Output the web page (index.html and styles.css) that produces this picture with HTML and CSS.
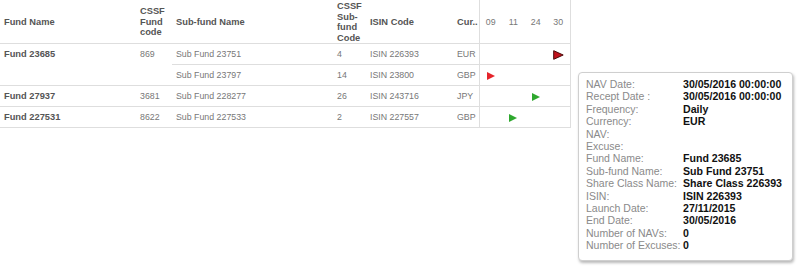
FILE: index.html
```html
<!DOCTYPE html>
<html>
<head>
<meta charset="utf-8">
<link rel="stylesheet" href="styles.css">
</head>
<body>
<table class="grid">
  <colgroup>
    <col class="c-fund"><col class="c-cssf"><col class="c-sub"><col class="c-subcode"><col class="c-isin"><col class="c-cur"><col class="c-dates">
  </colgroup>
  <thead>
    <tr>
      <th>Fund Name</th>
      <th>CSSF Fund code</th>
      <th>Sub-fund Name</th>
      <th>CSSF Sub-fund Code</th>
      <th>ISIN Code</th>
      <th class="cur">Cur..</th>
      <th class="dates"><div class="days"><span>09</span><span>11</span><span>24</span><span>30</span></div></th>
    </tr>
  </thead>
  <tbody>
    <tr>
      <td rowspan="2" class="fund">Fund 23685</td>
      <td rowspan="2">869</td>
      <td>Sub Fund 23751</td>
      <td>4</td>
      <td>ISIN 226393</td>
      <td class="cur">EUR</td>
      <td class="dates"><div class="days"><span></span><span></span><span></span><span><svg class="flag big" width="11" height="10" viewBox="0 0 11 10"><polygon points="0.7,0.7 10.2,5 0.7,9.3" fill="#c0121c" stroke="#4a0a0a" stroke-width="1"/></svg></span></div></td>
    </tr>
    <tr>
      <td>Sub Fund 23797</td>
      <td>14</td>
      <td>ISIN 23800</td>
      <td class="cur">GBP</td>
      <td class="dates"><div class="days"><span><svg class="flag" width="8" height="8" viewBox="0 0 8 8"><polygon points="0,0 8,4 0,8" fill="#e5242b"/></svg></span><span></span><span></span><span></span></div></td>
    </tr>
    <tr>
      <td class="fund">Fund 27937</td>
      <td>3681</td>
      <td>Sub Fund 228277</td>
      <td>26</td>
      <td>ISIN 243716</td>
      <td class="cur">JPY</td>
      <td class="dates"><div class="days"><span></span><span></span><span><svg class="flag" width="8" height="8" viewBox="0 0 8 8"><polygon points="0,0 8,4 0,8" fill="#2ea82e"/></svg></span><span></span></div></td>
    </tr>
    <tr>
      <td class="fund">Fund 227531</td>
      <td>8622</td>
      <td>Sub Fund 227533</td>
      <td>2</td>
      <td>ISIN 227557</td>
      <td class="cur">GBP</td>
      <td class="dates"><div class="days"><span></span><span><svg class="flag" width="8" height="8" viewBox="0 0 8 8"><polygon points="0,0 8,4 0,8" fill="#2ea82e"/></svg></span><span></span><span></span></div></td>
    </tr>
  </tbody>
</table>

<div class="tip">
  <div class="row"><span class="lbl">NAV Date:</span><span class="val">30/05/2016 00:00:00</span></div>
  <div class="row"><span class="lbl">Recept Date :</span><span class="val">30/05/2016 00:00:00</span></div>
  <div class="row"><span class="lbl">Frequency:</span><span class="val">Daily</span></div>
  <div class="row"><span class="lbl">Currency:</span><span class="val">EUR</span></div>
  <div class="row"><span class="lbl">NAV:</span><span class="val"></span></div>
  <div class="row"><span class="lbl">Excuse:</span><span class="val"></span></div>
  <div class="row"><span class="lbl">Fund Name:</span><span class="val">Fund 23685</span></div>
  <div class="row"><span class="lbl">Sub-fund Name:</span><span class="val">Sub Fund 23751</span></div>
  <div class="row"><span class="lbl">Share Class Name:</span><span class="val">Share Class 226393</span></div>
  <div class="row"><span class="lbl">ISIN:</span><span class="val">ISIN 226393</span></div>
  <div class="row"><span class="lbl">Launch Date:</span><span class="val">27/11/2015</span></div>
  <div class="row"><span class="lbl">End Date:</span><span class="val">30/05/2016</span></div>
  <div class="row"><span class="lbl">Number of NAVs:</span><span class="val">0</span></div>
  <div class="row"><span class="lbl">Number of Excuses:</span><span class="val">0</span></div>
</div>
</body>
</html>
```
FILE: styles.css
```css
html, body {
  margin: 0;
  padding: 0;
  background: #fff;
  font-family: "Liberation Sans", Arial, sans-serif;
}

.grid {
  border-collapse: collapse;
  table-layout: fixed;
  width: 570px;
}

.c-fund { width: 136px; }
.c-cssf { width: 36px; }
.c-sub { width: 161px; }
.c-subcode { width: 33px; }
.c-isin { width: 87px; }
.c-cur { width: 26px; }
.c-dates { width: 91px; }

.grid th {
  text-align: left;
  vertical-align: middle;
  font-size: 9.3px;
  font-weight: bold;
  line-height: 10.5px;
  color: #555;
  padding: 1px 4px 0;
  height: 42px;
  border-bottom: 1px solid #dedede;
}

.grid td {
  vertical-align: top;
  font-size: 8.8px;
  line-height: 11px;
  color: #777;
  padding: 5px 4px 4px;
  white-space: nowrap;
  border-bottom: 1px solid #dedede;
}

.grid td.fund {
  font-size: 9.3px;
  font-weight: bold;
  color: #555;
}

.grid .cur {
  padding-right: 0;
  white-space: nowrap;
  overflow: hidden;
}

.grid .dates {
  padding-left: 0;
  padding-right: 0;
  border-left: 1px solid #dedede;
  border-right: 1px solid #dedede;
}

.grid th.dates .days span {
  font-weight: normal;
  font-size: 8.8px;
  color: #777;
}

.days {
  display: grid;
  grid-template-columns: repeat(4, 1fr);
  height: 11px;
}

.days span {
  display: flex;
  align-items: center;
  justify-content: center;
  height: 11px;
}

.flag {
  display: block;
}

.tip {
  position: absolute;
  left: 578px;
  top: 72px;
  width: 215px;
  height: 189px;
  box-sizing: border-box;
  padding: 5px 7px;
  background: #fff;
  border: 1px solid #cfcfcf;
  border-radius: 4px;
  box-shadow: 1px 2px 3px rgba(0, 0, 0, 0.28);
  font-size: 10.6px;
  line-height: 12.4px;
}

.tip .row {
  display: flex;
  white-space: nowrap;
  height: 12.4px;
}

.tip .lbl {
  flex: none;
  min-width: 97px;
  font-size: 10.5px;
  color: #8a8a8a;
}

.tip .val {
  font-weight: bold;
  color: #111;
}
```
